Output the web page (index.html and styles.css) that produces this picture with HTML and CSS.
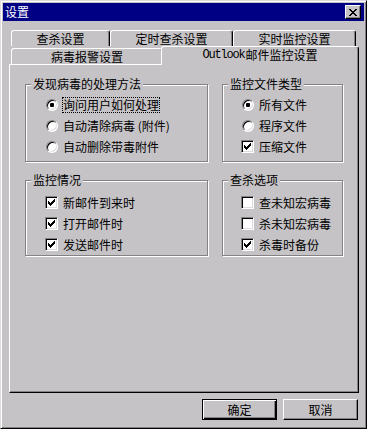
FILE: index.html
```html
<!DOCTYPE html>
<html lang="zh-CN">
<head>
<meta charset="utf-8">
<title>设置</title>
<link rel="stylesheet" href="styles.css">
</head>
<body>
<div class="window">
  <div class="titlebar">
    <span class="title">设置</span>
    <span class="close-btn">
      <svg class="close-x" width="8" height="7" viewBox="0 0 8 7" shape-rendering="crispEdges"><path d="M0 0h2v1H0z M6 0h2v1H6z M1 1h2v1H1z M5 1h2v1H5z M2 2h4v1H2z M3 3h2v1H3z M2 4h4v1H2z M1 5h2v1H1z M5 5h2v1H5z M0 6h2v1H0z M6 6h2v1H6z" fill="#000"/></svg>
    </span>
  </div>
  <div class="content">
    <div class="tabs">
      <div class="tab-row">
        <div class="tab tab-a">查杀设置</div>
        <div class="tab tab-b">定时查杀设置</div>
        <div class="tab tab-b">实时监控设置</div>
      </div>
      <div class="tab-row">
        <div class="tab tab-c">病毒报警设置</div>
        <div class="tab tab-d active"><span class="latin">Outlook</span>邮件监控设置</div>
      </div>
    </div>
    <div class="panel">
      <div class="groups">
        <div class="group">
          <span class="legend">发现病毒的处理方法</span>
          <div class="items">
            <div class="item"><span class="radio checked"></span><span class="label focus">询问用户如何处理</span></div>
            <div class="item"><span class="radio"></span><span class="label">自动清除病毒 (附件)</span></div>
            <div class="item"><span class="radio"></span><span class="label">自动删除带毒附件</span></div>
          </div>
        </div>
        <div class="group right">
          <span class="legend">监控文件类型</span>
          <div class="items">
            <div class="item"><span class="radio checked"></span><span class="label">所有文件</span></div>
            <div class="item"><span class="radio"></span><span class="label">程序文件</span></div>
            <div class="item"><span class="check checked"><svg width="7" height="7" viewBox="0 0 7 7" shape-rendering="crispEdges"><path d="M6 0h1v1H6z M5 1h2v1H5z M0 2h1v1H0z M4 2h3v1H4z M0 3h2v1H0z M3 3h3v1H3z M0 4h5v1H0z M1 5h3v1H1z M2 6h1v1H2z" fill="#000"/></svg></span><span class="label">压缩文件</span></div>
          </div>
        </div>
        <div class="group checks">
          <span class="legend">监控情况</span>
          <div class="items">
            <div class="item"><span class="check checked"><svg width="7" height="7" viewBox="0 0 7 7" shape-rendering="crispEdges"><path d="M6 0h1v1H6z M5 1h2v1H5z M0 2h1v1H0z M4 2h3v1H4z M0 3h2v1H0z M3 3h3v1H3z M0 4h5v1H0z M1 5h3v1H1z M2 6h1v1H2z" fill="#000"/></svg></span><span class="label">新邮件到来时</span></div>
            <div class="item"><span class="check checked"><svg width="7" height="7" viewBox="0 0 7 7" shape-rendering="crispEdges"><path d="M6 0h1v1H6z M5 1h2v1H5z M0 2h1v1H0z M4 2h3v1H4z M0 3h2v1H0z M3 3h3v1H3z M0 4h5v1H0z M1 5h3v1H1z M2 6h1v1H2z" fill="#000"/></svg></span><span class="label">打开邮件时</span></div>
            <div class="item"><span class="check checked"><svg width="7" height="7" viewBox="0 0 7 7" shape-rendering="crispEdges"><path d="M6 0h1v1H6z M5 1h2v1H5z M0 2h1v1H0z M4 2h3v1H4z M0 3h2v1H0z M3 3h3v1H3z M0 4h5v1H0z M1 5h3v1H1z M2 6h1v1H2z" fill="#000"/></svg></span><span class="label">发送邮件时</span></div>
          </div>
        </div>
        <div class="group right checks">
          <span class="legend">查杀选项</span>
          <div class="items">
            <div class="item"><span class="check"></span><span class="label">查未知宏病毒</span></div>
            <div class="item"><span class="check"></span><span class="label">杀未知宏病毒</span></div>
            <div class="item"><span class="check checked"><svg width="7" height="7" viewBox="0 0 7 7" shape-rendering="crispEdges"><path d="M6 0h1v1H6z M5 1h2v1H5z M0 2h1v1H0z M4 2h3v1H4z M0 3h2v1H0z M3 3h3v1H3z M0 4h5v1H0z M1 5h3v1H1z M2 6h1v1H2z" fill="#000"/></svg></span><span class="label">杀毒时备份</span></div>
          </div>
        </div>
      </div>
    </div>
    <div class="buttons">
      <div class="btn default">确定</div>
      <div class="btn">取消</div>
    </div>
  </div>
</div>
</body>
</html>
```
FILE: styles.css
```css
* { box-sizing: border-box; }
html, body { margin: 0; padding: 0; }
body {
  width: 367px;
  height: 429px;
  overflow: hidden;
  background: #c6c3c6;
  font-family: "Noto Sans CJK SC", "Noto Sans", sans-serif;
  font-size: 12px;
  color: #000;
}
.window {
  width: 367px;
  height: 429px;
  border: 1px solid;
  border-color: #dedbde #000 #000 #dedbde;
  box-shadow: inset 1px 1px #fff, inset -1px -1px #848284;
  padding: 2px;
  display: flex;
  flex-direction: column;
  background: #c6c3c6;
}
.titlebar {
  height: 18px;
  flex: none;
  background: #000084;
  color: #fff;
  display: flex;
  align-items: center;
  justify-content: space-between;
  padding: 0 3px 0 2px;
}
.title { line-height: 12px; }
.close-btn {
  width: 16px;
  height: 14px;
  background: #c6c3c6;
  border: 1px solid;
  border-color: #fff #000 #000 #fff;
  box-shadow: inset -1px -1px #848284;
  display: flex;
  align-items: center;
  justify-content: center;
}
.close-x { display: block; }
.content {
  flex: 1;
  display: flex;
  flex-direction: column;
  padding: 7px 5px 6px 6px;
}
.tabs {
  margin-left: 2px;
  position: relative;
  z-index: 1;
  flex: none;
}
.tab-row { display: flex; height: 18px; }
.tab {
  height: 16px;
  margin-top: 2px;
  border-top: 1px solid #fff;
  border-left: 1px solid #fff;
  border-right: 1px solid #000;
  border-radius: 3px 3px 0 0;
  box-shadow: inset -1px 0 #848284;
  background: #c6c3c6;
  display: flex;
  align-items: center;
  justify-content: center;
  line-height: 12px;
  white-space: nowrap;
}
.tab-a { width: 99px; }
.tab-b { width: 123px; }
.tab-c { width: 152px; }
.tab-d { width: 194px; }
.tab.active {
  position: relative;
  z-index: 2;
  width: 198px;
  height: 19px;
  margin: 0 -2px -1px -2px;
  padding-bottom: 3px;
}
.latin {
  font-family: "Liberation Mono", monospace;
  font-size: 12px;
  letter-spacing: -1.2px;
  margin-right: 1px;
}
.panel {
  flex: 1;
  border: 1px solid;
  border-color: #fff #000 #000 #fff;
  box-shadow: inset -1px -1px #848284;
  padding: 19px 0 0 15px;
}
.groups {
  display: grid;
  grid-template-columns: 183px 121px;
  column-gap: 14px;
  row-gap: 18px;
}
.group {
  height: 78px;
  border: 1px solid #848284;
  box-shadow: inset 1px 1px #fff, 1px 1px #fff;
}
.group.checks { height: 76px; }
.legend {
  display: block;
  width: max-content;
  height: 12px;
  line-height: 12px;
  margin: -7px 0 0 5px;
  padding: 0 2px;
  background: #c6c3c6;
}
.items { margin-top: 4px; padding-left: 19px; }
.group.right .items { padding-left: 18px; }
.group.checks .items { margin-top: 6px; }
.item {
  height: 21px;
  display: flex;
  align-items: center;
}
.radio {
  position: relative;
  width: 12px;
  height: 12px;
  margin-left: 1px;
  border-radius: 50%;
  border: 1px solid;
  border-color: #848284 #fff #fff #848284;
  box-shadow: inset 1px 1px #000, inset -1px -1px #dedbde;
  background: #fff;
  display: flex;
  align-items: center;
  justify-content: center;
}
.radio.checked::after {
  content: "";
  width: 4px;
  height: 4px;
  border-radius: 1px;
  background: #000;
}
.check {
  width: 13px;
  height: 13px;
  border: 1px solid;
  border-color: #848284 #fff #fff #848284;
  box-shadow: inset 1px 1px #000, inset -1px -1px #dedbde;
  background: #fff;
  display: flex;
  align-items: center;
  justify-content: center;
}
.check svg { display: block; }
.label {
  margin-left: 4px;
  height: 16px;
  padding: 2px 1px;
  line-height: 12px;
  white-space: nowrap;
}
.label.focus { outline: 1px dotted #000; outline-offset: -1px; }
.buttons {
  flex: none;
  display: flex;
  justify-content: flex-end;
  gap: 6px;
  margin-top: 6px;
  padding-right: 1px;
}
.btn {
  width: 75px;
  height: 21px;
  border: 1px solid;
  border-color: #fff #000 #000 #fff;
  box-shadow: inset -1px -1px #848284;
  display: flex;
  align-items: center;
  justify-content: center;
  line-height: 12px;
}
.btn.default {
  border-color: #000;
  box-shadow: inset 1px 1px #fff, inset -1px -1px #000, inset -2px -2px #848284;
}
```
